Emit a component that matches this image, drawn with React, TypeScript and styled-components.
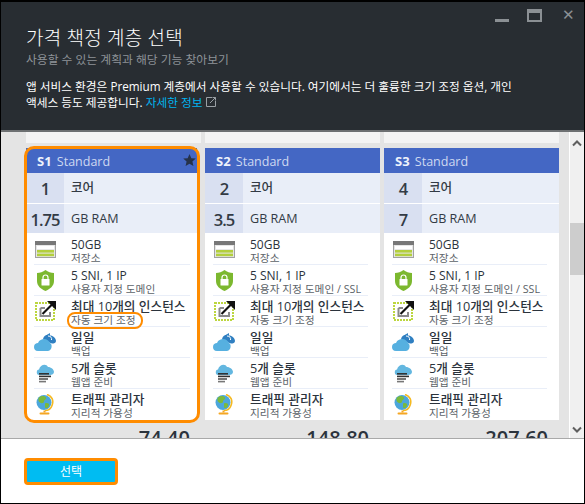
import React from 'react';
import styled, { createGlobalStyle } from 'styled-components';

const GlobalStyle = createGlobalStyle`
  html, body {
    margin: 0;
    padding: 0;
    background: #fff;
  }
  * {
    box-sizing: border-box;
  }
`;

const StorageIcon = () => (
  <svg width="21" height="17" viewBox="0 0 21 17">
    <rect x="0" y="0" width="21" height="17" fill="#a2a2a2" />
    <path d="M0 0 H21 V4 H0 Z" fill="#777" />
    <rect x="1" y="4" width="19" height="12" fill="#e6e6e6" />
    <rect x="2" y="5" width="17" height="3" fill="#fff" />
    <rect x="2" y="9" width="17" height="2.6" fill="#b3cf3c" />
    <rect x="2" y="12.6" width="17" height="2.6" fill="#b3cf3c" />
  </svg>
);

const ShieldIcon = () => (
  <svg width="17" height="21" viewBox="0 0 17 21">
    <path d="M8.5 0 C11 2 14 3 17 3 V11 C17 16 13 19 8.5 21 C4 19 0 16 0 11 V3 C3 3 6 2 8.5 0 Z" fill="#7cb82f" />
    <rect x="4.5" y="9" width="8" height="6.5" rx="0.5" fill="#fff" />
    <path d="M6 9 V7.5 A2.5 2.5 0 0 1 11 7.5 V9" fill="none" stroke="#fff" strokeWidth="1.2" />
  </svg>
);

const ScaleIcon = () => (
  <svg width="21" height="20" viewBox="0 0 21 20">
    <rect x="1" y="2" width="18" height="17" fill="none" stroke="#bcd63f" strokeWidth="2" strokeDasharray="2 1" />
    <path d="M5.5 7 H10 M5.5 7 V15 H15 V11" fill="none" stroke="#8a8a8a" strokeWidth="2" />
    <path d="M7.5 13 L17 3.5" stroke="#111" strokeWidth="2.2" />
    <path d="M12 0 H21 V9 Z" fill="#111" />
  </svg>
);

const BackupIcon = () => (
  <svg width="22" height="18" viewBox="0 0 22 18">
    <path d="M9 6 C10 2 14 1 16 2.5 C19 2.5 22 5 22 8 C22 10 20 10.5 18 10.5 L11 8 Z" fill="#2f7fc1" />
    <path d="M12 2.5 L16 0 V5 Z" fill="#2f7fc1" />
    <path d="M14 3 C17 3 18 5 17.5 7" fill="none" stroke="#fff" strokeWidth="1" />
    <path d="M4 18 C1 18 0 16 0 14 C0 11 2 10 4 10 C5 7 8 6 10 6 C13 6 15 8 16 10 C18 11 18 14 17 16 C16 17 15 18 14 18 Z" fill="#56b0e0" />
  </svg>
);

const SlotIcon = () => (
  <svg width="18" height="21" viewBox="0 0 18 21">
    <path d="M3 12 C0 12 0 6.5 3 6.5 C4 2 10 0 12 4 C15 4 18 6.5 18 9 C18 11 16 12 14 12 Z" fill="#63b7e0" />
    <rect x="3" y="10" width="10" height="1.6" fill="#333" />
    <rect x="3" y="12.6" width="12" height="1.6" fill="#333" />
    <rect x="3" y="15.2" width="9" height="1.6" fill="#555" />
    <rect x="3" y="17.8" width="7" height="1.6" fill="#777" />
  </svg>
);

const GlobeIcon = () => (
  <svg width="18" height="21" viewBox="0 0 18 21">
    <circle cx="8" cy="8.5" r="7.5" fill="#4ba6dc" />
    <path d="M3 3.5 C5 1.5 9 1.5 10 3.5 C11 5.5 8 5.5 8 7.5 C8 9.5 5 9.5 4 8.5 C2 7.5 2 4.5 3 3.5 Z" fill="#7ab93c" />
    <path d="M9 9.5 C11 8.5 14 9.5 13 11.5 C12 14.5 10 14.5 9 13.5 Z" fill="#7ab93c" />
    <path d="M11 0.5 C16 2 18 6.5 16 11.5 C15 14.5 12 16.5 9 16.5" fill="none" stroke="#f5b921" strokeWidth="1.6" />
    <rect x="7.5" y="16.5" width="2" height="2" fill="#f5a623" />
    <rect x="3.5" y="18.5" width="10" height="2" rx="1" fill="#f5a623" />
  </svg>
);

const ExternalIcon = () => (
  <svg width="10" height="10" viewBox="0 0 10 10">
    <path d="M6 .5 H.5 V9.5 H9.5 V4 M9.5 .5 L4 6 M6.5 .5 H9.5 V3.5" fill="none" stroke="#9aa0a5" strokeWidth="1" />
  </svg>
);

const StarIcon = () => (
  <svg width="13" height="12" viewBox="0 0 24 23">
    <path d="M12 0 L15.5 8 L24 8.8 L17.6 14.4 L19.5 23 L12 18.5 L4.5 23 L6.4 14.4 L0 8.8 L8.5 8 Z" fill="#26324a" />
  </svg>
);

const ChevronIcon = ({ down }: { down?: boolean }) => (
  <svg width="10" height="7" viewBox="0 0 10 7">
    <path d={down ? 'M1 1.5 L5 5.5 L9 1.5' : 'M1 5.5 L5 1.5 L9 5.5'} fill="none" stroke="#5f5f5f" strokeWidth="2" />
  </svg>
);

const features = (extra: string) => [
  { icon: <StorageIcon />, title: '50GB', sub: '저장소' },
  { icon: <ShieldIcon />, title: '5 SNI, 1 IP', sub: `사용자 지정 도메인${extra}` },
  { icon: <ScaleIcon />, title: '최대 10개의 인스턴스', sub: '자동 크기 조정', wide: true, circled: true },
  { icon: <BackupIcon />, title: '일일', sub: '백업', wide: true },
  { icon: <SlotIcon />, title: '5개 슬롯', sub: '웹앱 준비', wide: true },
  { icon: <GlobeIcon />, title: '트래픽 관리자', sub: '지리적 가용성', wide: true },
];

const plans = [
  { code: 'S1', cores: '1', ram: '1.75', price: '74.40', extra: '', selected: true },
  { code: 'S2', cores: '2', ram: '3.5', price: '148.80', extra: ' / SSL', selected: false },
  { code: 'S3', cores: '4', ram: '7', price: '207.60', extra: ' / SSL', selected: false },
];

function App() {
  return (
    <>
      <GlobalStyle />
      <Dialog>
        <Header>
          <WindowButtons>
            <Minimize />
            <Maximize />
            <Close>✕</Close>
          </WindowButtons>
          <Title>가격 책정 계층 선택</Title>
          <Subtitle>사용할 수 있는 계획과 해당 기능 찾아보기</Subtitle>
          <Notice>
            앱 서비스 환경은 Premium 계층에서 사용할 수 있습니다. 여기에서는 더 훌륭한 크기 조정 옵션, 개인
            <br />
            액세스 등도 제공합니다. <NoticeLink>자세한 정보</NoticeLink> <ExternalIcon />
          </Notice>
        </Header>

        <Body>
          <Gallery>
            <Stubs>
              {plans.map((plan) => (
                <Stub key={plan.code} />
              ))}
            </Stubs>
            <Cards>
              {plans.map((plan) => (
                <CardColumn key={plan.code}>
                  <Card $selected={plan.selected}>
                    <CardHead>
                      <strong>{plan.code}</strong> Standard
                      {plan.selected && (
                        <StarSlot>
                          <StarIcon />
                        </StarSlot>
                      )}
                    </CardHead>
                    <SpecRow>
                      <SpecValue>{plan.cores}</SpecValue>
                      <SpecLabel>코어</SpecLabel>
                    </SpecRow>
                    <SpecRow>
                      <SpecValue>{plan.ram}</SpecValue>
                      <SpecLabel>GB RAM</SpecLabel>
                    </SpecRow>
                    <FeatureList $selected={plan.selected}>
                      {features(plan.extra).map((item) => (
                        <Feature key={item.title}>
                          <FeatureIcon>{item.icon}</FeatureIcon>
                          <FeatureText>
                            <FeatureTitle $wide={item.wide}>{item.title}</FeatureTitle>
                            <FeatureSub>
                              {item.sub}
                              {item.circled && plan.selected && <Callout />}
                            </FeatureSub>
                          </FeatureText>
                        </Feature>
                      ))}
                    </FeatureList>
                    {plan.selected && <CardOutline />}
                  </Card>
                  <Price>{plan.price}</Price>
                </CardColumn>
              ))}
            </Cards>
          </Gallery>
          <Scrollbar>
            <ChevronIcon />
            <ScrollThumb />
            <ScrollDown>
              <ChevronIcon down />
            </ScrollDown>
          </Scrollbar>
        </Body>

        <Footer>
          <SelectButton>선택</SelectButton>
        </Footer>
      </Dialog>
    </>
  );
}

export default App;

const FONT = `'Open Sans', 'Noto Sans CJK KR', sans-serif`;

const Dialog = styled.div`
  display: flex;
  flex-direction: column;
  width: 585px;
  height: 504px;
  border: 1px solid #000;
  border-top-width: 2px;
  font-family: ${FONT};
  background: #fff;
  overflow: hidden;
`;

const Header = styled.header`
  position: relative;
  flex: none;
  height: 130px;
  padding: 23px 25px 0;
  background: #282d32;
  border-bottom: 2px solid #6d7072;
  color: #fff;
`;

const WindowButtons = styled.div`
  position: absolute;
  top: 7px;
  right: 8px;
  display: flex;
  align-items: flex-start;
  gap: 20px;
`;

const Minimize = styled.span`
  display: block;
  width: 14px;
  height: 3px;
  margin: 10px -2px 0 0;
  background: #8b9094;
`;

const Maximize = styled.span`
  display: block;
  width: 15px;
  height: 13px;
  border: 2px solid #8b9094;
  border-top-width: 4px;
`;

const Close = styled.span`
  display: block;
  width: 14px;
  font: 700 15px/13px 'DejaVu Sans', sans-serif;
  color: #8b9094;
`;

const Title = styled.h1`
  margin: 0;
  font-size: 19px;
  font-weight: 300;
  line-height: 26px;
  letter-spacing: 0.2px;
  white-space: nowrap;
`;

const Subtitle = styled.p`
  margin: 0;
  font-size: 11.8px;
  line-height: 16px;
  color: #8e9398;
  white-space: nowrap;
`;

const Notice = styled.p`
  margin: 11px 0 0;
  font-size: 11.7px;
  line-height: 16px;
  white-space: nowrap;
`;

const NoticeLink = styled.span`
  color: #00b4f0;
`;

const Body = styled.main`
  flex: none;
  display: flex;
  height: 307px;
  background: #e4e4e4;
  border-bottom: 1px solid #a9a9a9;
  overflow: hidden;
`;

const Gallery = styled.div`
  flex: 1;
  min-width: 0;
  padding-left: 25px;
`;

const Stubs = styled.div`
  display: flex;
  gap: 4px;
  margin-bottom: 5px;
`;

const Stub = styled.div`
  width: 175px;
  height: 11px;
  background: #f4f4f4;
`;

const Cards = styled.div`
  display: flex;
  gap: 4px;
  align-items: flex-start;
`;

const CardColumn = styled.section`
  width: 175px;
`;

const Card = styled.div<{ $selected?: boolean }>`
  position: relative;
  margin-right: ${({ $selected }) => ($selected ? 4 : 0)}px;
  background: #fff;
`;

const CardOutline = styled.div`
  position: absolute;
  inset: -2px -3px -3px -2px;
  border: 3px solid #ff8c00;
  border-radius: 10px;
`;

const CardHead = styled.div`
  position: relative;
  height: 25px;
  padding-left: 11px;
  background: #4467c4;
  color: #cfd9f1;
  font-size: 12.5px;
  line-height: 26px;

  & strong {
    margin-right: 2px;
    font-size: 13px;
    font-weight: 700;
    color: #eef2fb;
  }
`;

const StarSlot = styled.span`
  position: absolute;
  top: 6px;
  right: 1px;
  line-height: 0;
`;

const SpecRow = styled.div`
  display: flex;
  height: 30.5px;
  border-bottom: 1px solid #fff;
  background: #e9eef8;
  color: #333b45;
`;

const SpecValue = styled.div`
  flex: none;
  width: 38px;
  background: #d9e0f1;
  text-align: center;
  font-size: 16.5px;
  font-weight: 600;
  letter-spacing: -1px;
  line-height: 31px;
`;

const SpecLabel = styled.div`
  padding-left: 7px;
  font-size: 12.6px;
  font-weight: 500;
  line-height: 30px;
`;

const FeatureList = styled.div<{ $selected?: boolean }>`
  padding-right: ${({ $selected }) => ($selected ? 7 : 12)}px;
`;

const Feature = styled.div`
  display: flex;
  height: 31px;
  margin-left: 8px;
  border-bottom: 1px solid #e9eef8;
  color: #2b333c;

  &:last-child {
    border-bottom: 0;
  }
`;

const FeatureIcon = styled.div`
  flex: none;
  display: flex;
  align-items: center;
  justify-content: center;
  width: 37px;
  padding-right: 15px;
  line-height: 0;
`;

const FeatureText = styled.div`
  padding-top: 3px;
  white-space: nowrap;
`;

const FeatureTitle = styled.div<{ $wide?: boolean }>`
  font-size: ${({ $wide }) => ($wide ? 12.7 : 12)}px;
  font-weight: 500;
  line-height: 15px;
`;

const FeatureSub = styled.div`
  position: relative;
  font-size: 10.7px;
  line-height: 13px;
  color: #5c6369;
`;

const Callout = styled.span`
  position: absolute;
  top: -2px;
  left: -4px;
  width: 76px;
  height: 17px;
  border: 2px solid #ff8c00;
  border-radius: 8px;
`;

const Price = styled.div`
  margin-top: 6px;
  padding-right: 11px;
  text-align: right;
  font-size: 20px;
  font-weight: 600;
  line-height: 24px;
  color: #2b333c;
`;

const Scrollbar = styled.aside`
  flex: none;
  display: flex;
  flex-direction: column;
  align-items: center;
  width: 15px;
  padding-top: 8px;
  background: #f0f0f0;
  border-left: 1px solid #fff;
`;

const ScrollThumb = styled.div`
  width: 100%;
  height: 52px;
  margin-top: 76px;
  background: #cdcdcd;
`;

const ScrollDown = styled.div`
  margin-top: auto;
  padding-bottom: 5px;
  line-height: 0;
`;

const Footer = styled.footer`
  flex: 1;
  display: flex;
  align-items: flex-start;
  padding: 19px 23px 0;
`;

const SelectButton = styled.button`
  width: 94px;
  height: 27px;
  padding: 0;
  border: 3px solid #ff8c00;
  border-radius: 4px;
  background: #00bcf2;
  color: #fff;
  font-family: ${FONT};
  font-size: 12px;
  line-height: 20px;
`;
